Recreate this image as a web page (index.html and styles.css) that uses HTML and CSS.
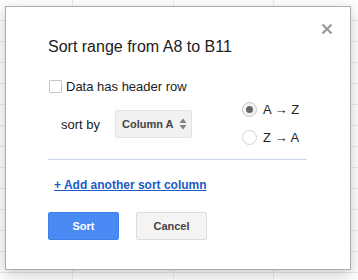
FILE: index.html
```html
<!DOCTYPE html>
<html lang="en">
  <head>
    <meta charset="UTF-8" />
    <title>Sort range</title>
    <link rel="stylesheet" href="styles.css">
  </head>
  <body>
    <div class="sheet">
      <div class="dialog">
        <span class="close">
          <svg width="12" height="12" viewBox="0 0 12 12"><path d="M1.5 1.5 L10.5 10.5 M10.5 1.5 L1.5 10.5" stroke="#9a9a9a" stroke-width="2.2" /></svg>
        </span>
        <div class="title">Sort range from A8 to B11</div>
        <label class="header-row"><span class="checkbox"></span>Data has header row</label>
        <div class="sort-row">
          <span class="sort-by">sort by</span>
          <span class="select">Column A
            <svg width="8" height="12" viewBox="0 0 8 12"><path d="M4 0.5 L7.5 5 L0.5 5 Z M4 11.5 L7.5 7 L0.5 7 Z" fill="#808080" /></svg>
          </span>
          <div class="radios">
            <div class="radio-line"><span class="radio on"></span>A → Z</div>
            <div class="radio-line"><span class="radio"></span>Z → A</div>
          </div>
        </div>
        <div class="sep"></div>
        <a class="add-link" href="#">+ Add another sort column</a>
        <div class="buttons">
          <button class="btn primary">Sort</button>
          <button class="btn">Cancel</button>
        </div>
      </div>
    </div>
  </body>
</html>
```

FILE: styles.css
```css
* {
  box-sizing: border-box;
}
body {
  margin: 0;
  font-family: 'Liberation Sans', Arial, sans-serif;
  color: #222;
}
.sheet {
  width: 358px;
  height: 280px;
  overflow: hidden;
  padding: 6px 0 0 5px;
  background-color: #fff;
  background-image:
    linear-gradient(to right, transparent 72px, #ececec 72px, #ececec 73px, transparent 73px, transparent 173px, #ececec 173px, #ececec 174px, transparent 174px, transparent 273px, #ececec 273px, #ececec 274px, transparent 274px),
    repeating-linear-gradient(to bottom, transparent 0, transparent 20px, #ececec 20px, #ececec 21px);
}
.dialog {
  position: relative;
  width: 346px;
  height: 264px;
  background: #fff;
  border: 1px solid #acacac;
  box-shadow: 0 4px 14px rgba(0, 0, 0, 0.22);
  padding: 30px 0 0 42px;
}
.close {
  position: absolute;
  top: 16px;
  right: 17px;
  line-height: 0;
}
.title {
  font-size: 16px;
  line-height: 19px;
  height: 19px;
}
.header-row {
  display: flex;
  align-items: center;
  margin-top: 22px;
  height: 16px;
  font-size: 13px;
}
.checkbox {
  width: 13px;
  height: 13px;
  border: 1px solid #c6c6c6;
  margin: 0 4px 0 1px;
  border-radius: 1px;
}
.sort-row {
  display: flex;
  align-items: center;
  margin-top: 1px;
}
.sort-by {
  font-size: 13px;
  margin-left: 13px;
  margin-top: 2px;
}
.select {
  display: flex;
  align-items: center;
  justify-content: space-between;
  width: 77px;
  height: 28px;
  margin-left: 15px;
  margin-top: 2px;
  padding: 0 4px 0 6px;
  background: #f1f1f1;
  border: 1px solid #e3e3e3;
  border-radius: 2px;
  font-size: 11px;
  font-weight: bold;
  color: #444;
}
.radios {
  margin-left: 50px;
}
.radio-line {
  display: flex;
  align-items: center;
  height: 28px;
  font-size: 13px;
}
.radio {
  width: 15px;
  height: 15px;
  border: 1px solid #d2d2d2;
  border-radius: 50%;
  margin-right: 6px;
  display: flex;
  align-items: center;
  justify-content: center;
}
.radio.on {
  border-color: #c6c6c6;
  background: #f4f4f4;
}
.radio.on::after {
  content: '';
  width: 7px;
  height: 7px;
  border-radius: 50%;
  background: #666;
}
.sep {
  width: 259px;
  height: 1px;
  background: #cbd7e6;
  margin-top: 8px;
}
.add-link {
  display: block;
  margin: 18px 0 0 6px;
  font-size: 12px;
  line-height: 15px;
  font-weight: bold;
  color: #1c5bc6;
}
.buttons {
  display: flex;
  gap: 17px;
  margin-top: 19px;
}
.btn {
  width: 71px;
  height: 28px;
  font-family: inherit;
  font-size: 11px;
  font-weight: bold;
  color: #444;
  background: #f4f4f4;
  border: 1px solid #dcdcdc;
  border-radius: 2px;
}
.btn.primary {
  background: #4a8af4;
  border-color: #3f7fe8;
  color: #fff;
}
```
